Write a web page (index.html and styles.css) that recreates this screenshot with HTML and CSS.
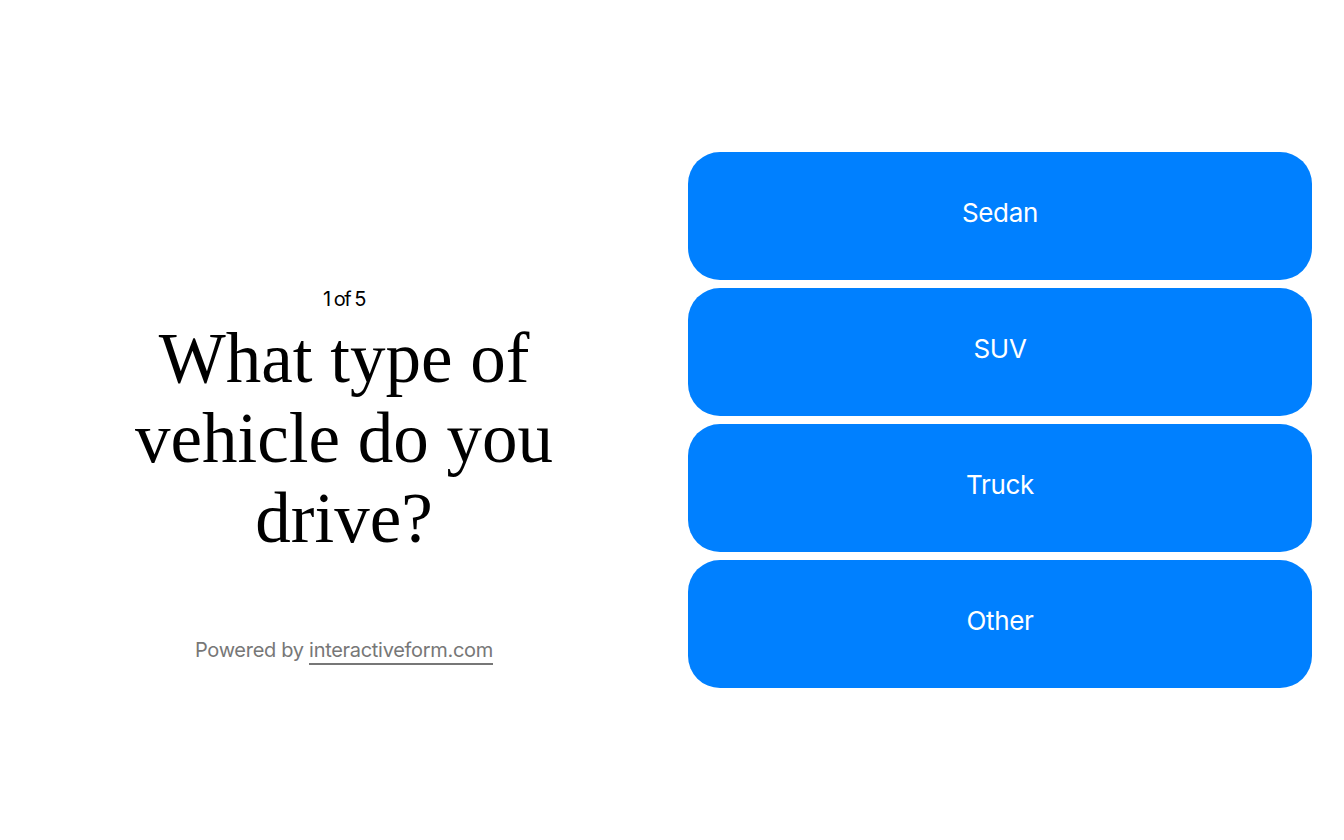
FILE: index.html
```html
<!DOCTYPE html>
<html lang="en">
<head>
    <meta charset="UTF-8">
    <meta name="viewport" content="width=device-width, initial-scale=1.0">
    <title>Interactive Form</title>
    <link rel="stylesheet" href="styles.css">
</head>
<body>

    <div class="form-page">
        <div class="question-side">
            <div class="question-count">1 of 5</div>
            <h1 class="question-title">What type of vehicle do you drive?</h1>
            <div class="powered">
                Powered by <a href="#">interactiveform.com</a>
            </div>
        </div>
        <div class="answers">
            <button class="answer">Sedan</button>
            <button class="answer">SUV</button>
            <button class="answer">Truck</button>
            <button class="answer">Other</button>
        </div>
    </div>

</body>
</html>
```

FILE: styles.css
```css
body {
    margin: 0;
    background-color: #fff;
    font-family: Inter, "Liberation Sans", sans-serif;
}

.form-page {
    display: grid;
    grid-template-columns: 1fr 1fr;
    gap: 32px;
    align-items: center;
    height: 100vh;
    padding: 0 32px;
    box-sizing: border-box;
}

.question-side {
    display: flex;
    flex-direction: column;
    align-items: center;
    text-align: center;
    padding-top: 108px;
}

.question-count {
    font-size: 20px;
    letter-spacing: -1.5px;
    color: #000;
}

.question-title {
    font-family: "Liberation Serif", serif;
    font-weight: normal;
    font-size: 71px;
    line-height: 80px;
    margin: 7px 0 0;
    max-width: 460px;
}

.powered {
    margin-top: 80px;
    font-size: 20px;
    letter-spacing: -0.3px;
    color: #777;
}

.powered a {
    color: #777;
    text-decoration: none;
    border-bottom: 2px solid #777;
    padding-bottom: 1px;
}

.answers {
    display: flex;
    flex-direction: column;
    gap: 8px;
}

.answer {
    height: 128px;
    padding: 0 0 7px;
    border: none;
    border-radius: 32px;
    background-color: #0080ff;
    color: #fff;
    font-family: Inter, "Liberation Sans", sans-serif;
    font-size: 26px;
    letter-spacing: -0.3px;
    cursor: pointer;
}
```
